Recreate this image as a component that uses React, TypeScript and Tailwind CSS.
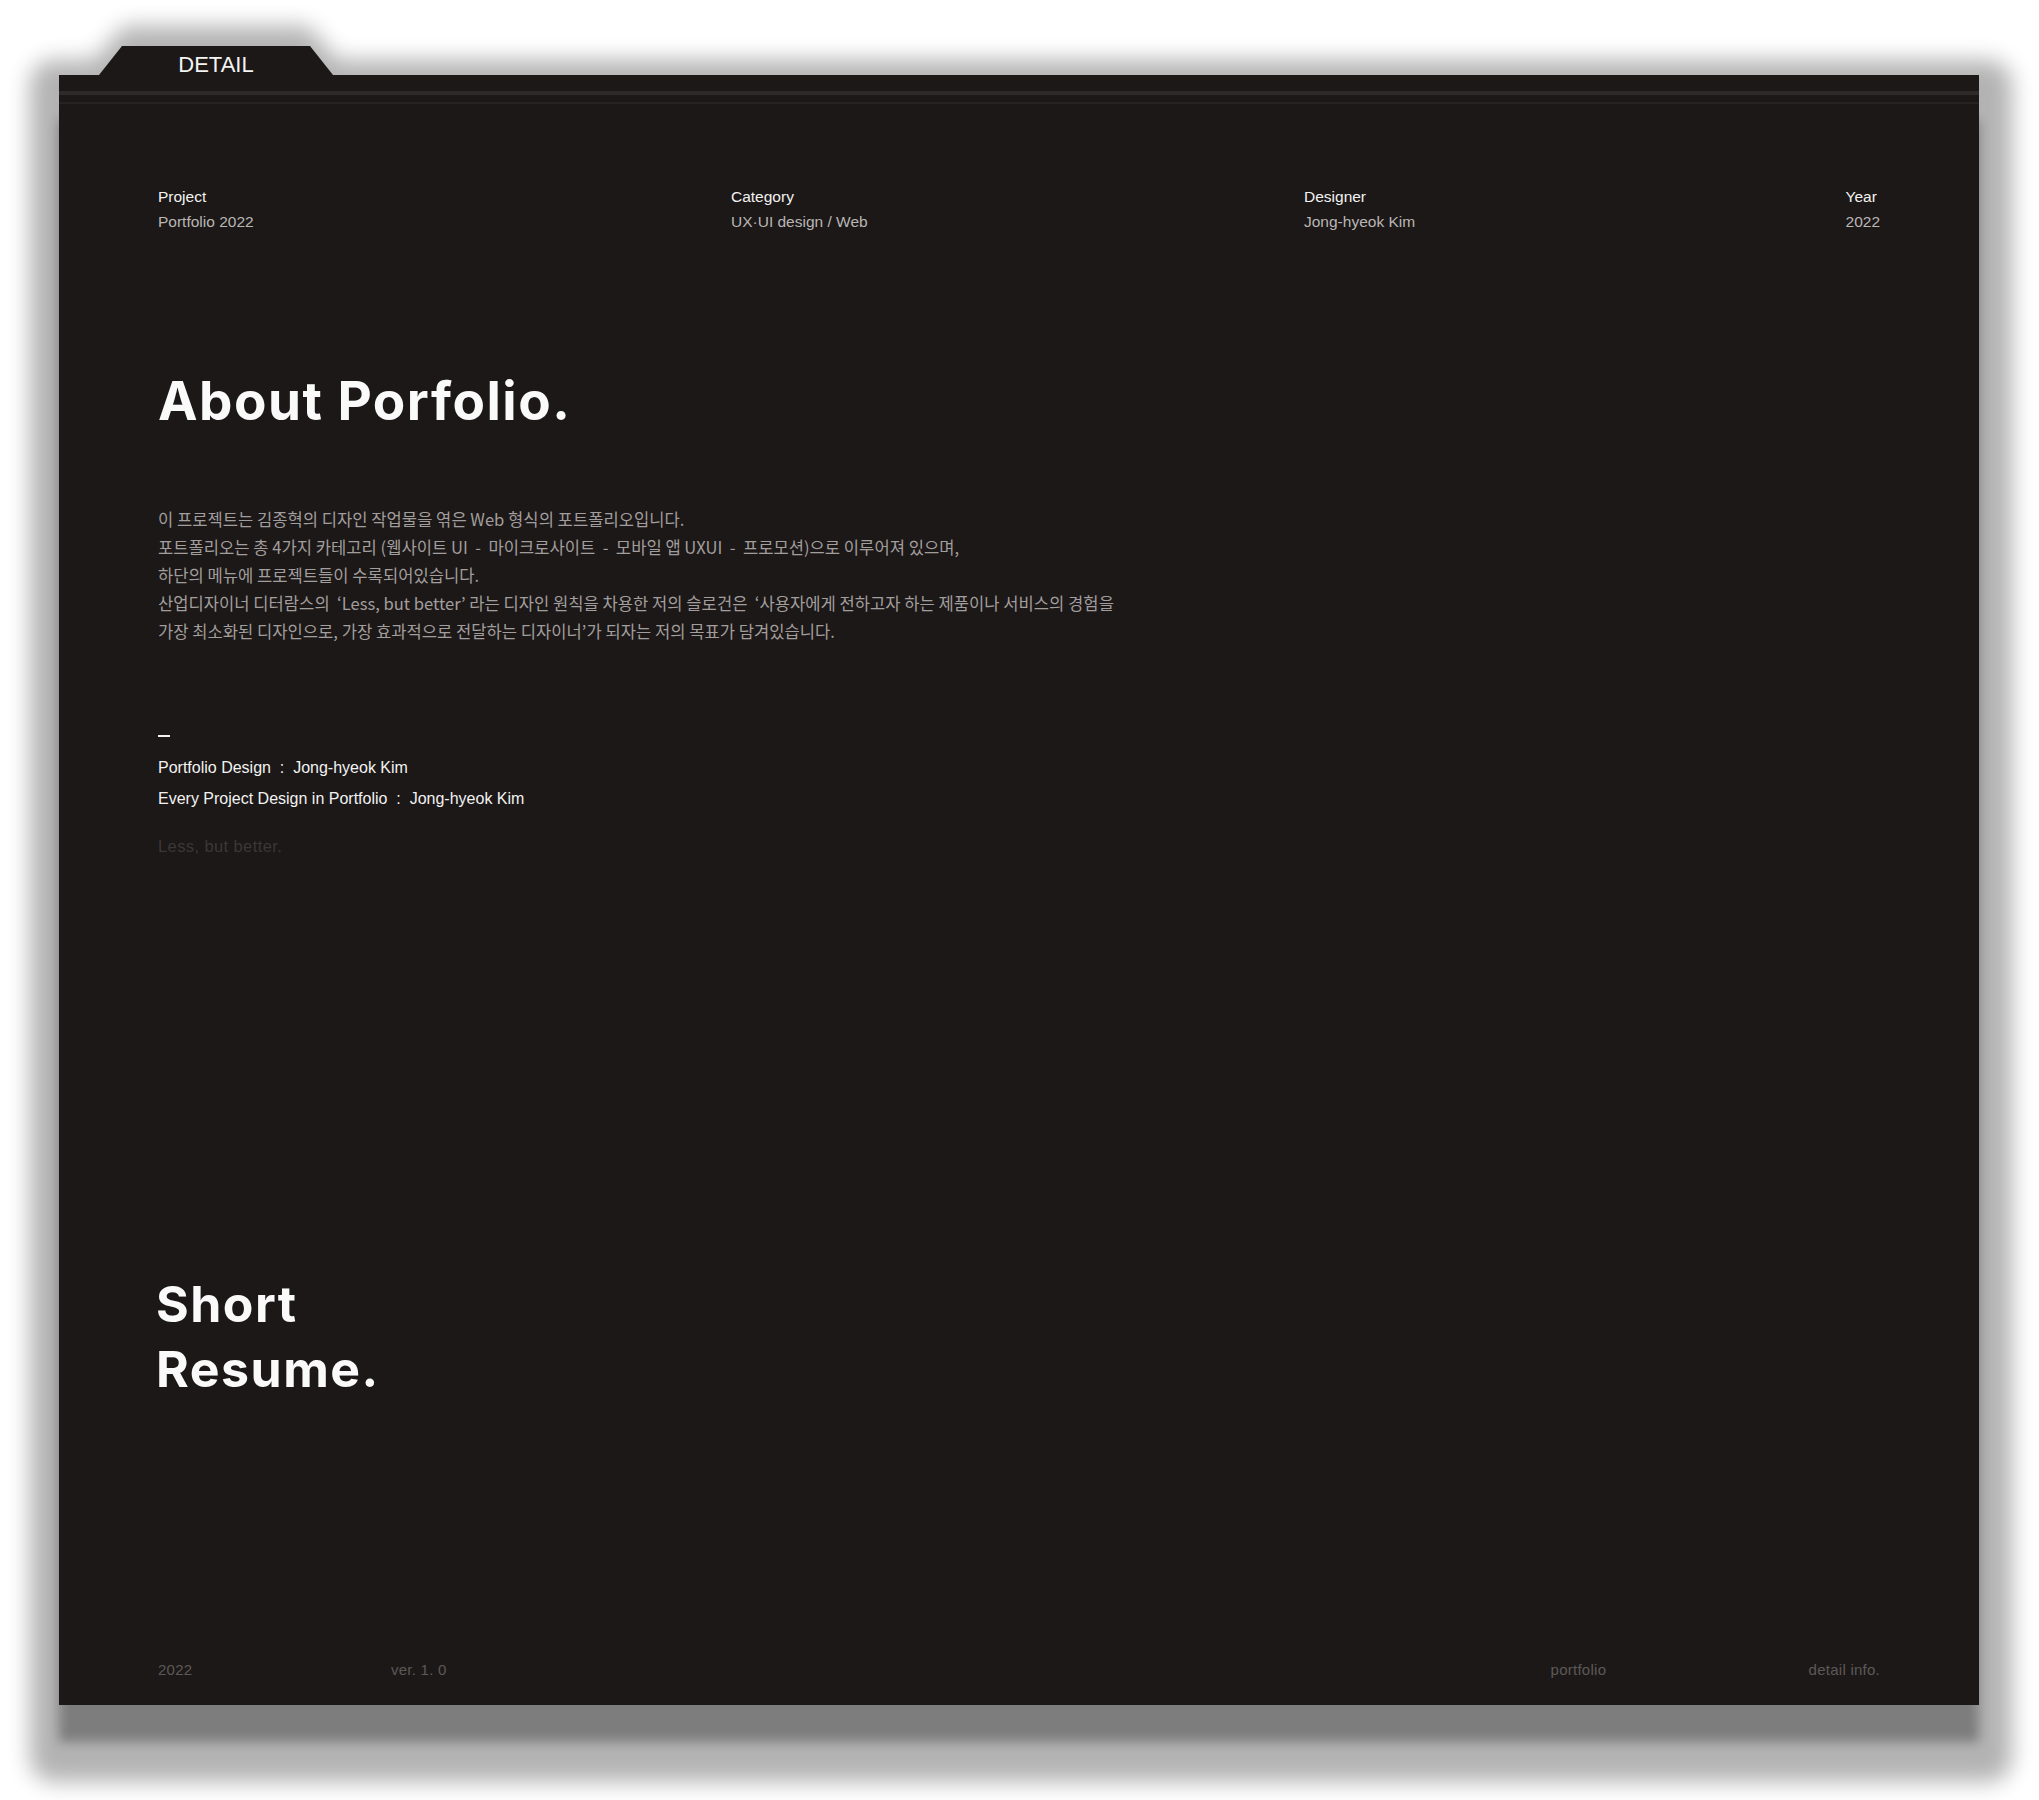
import React from "react";

const sans = { fontFamily: '"Liberation Sans", Arial, sans-serif' };
const head = { fontFamily: 'Inter, "Liberation Sans", sans-serif' };
const kr = { fontFamily: '"Noto Sans CJK KR", "Noto Sans", sans-serif' };

export default function App() {
  return (
    <div className="min-h-[1800px] w-[2039px] overflow-hidden bg-white pl-[59px] pt-[46px]">
      <div className="relative w-[1920px]">
        {/* shadow layers */}
        <div className="pointer-events-none absolute inset-0 opacity-30 blur-[11px]">
          <div className="absolute left-[-29px] right-[-33px] top-[14px] bottom-[-77px] rounded-[24px] bg-black" />
          <div className="absolute left-[4px] top-[-20px] h-[70px] w-[306px] bg-black [clip-path:polygon(20%_0,80%_0,100%_100%,0_100%)]" />
        </div>
        <div className="pointer-events-none absolute inset-0 opacity-30 blur-[6px]">
          <div className="absolute left-0 right-0 top-[74px] bottom-[-37px] bg-black" />
        </div>

        <div className="relative flex flex-col">
          {/* tab */}
          <div className="ml-[40px] flex h-[29px] w-[234px] items-start justify-center bg-[#1c1817] pt-[8px] [clip-path:polygon(23px_0,211px_0,100%_100%,0_100%)]">
            <span style={sans} className="text-[22px] leading-[22px] text-[#f4f4f4]">DETAIL</span>
          </div>

          {/* panel */}
          <div className="flex h-[1630px] flex-col bg-[#1c1817] pt-[16px]">
            <div className="h-[4px] bg-[#2e2a29]" />
            <div className="mt-[7px] h-[2px] bg-[#262221]" />

            <div className="flex flex-1 flex-col px-[99px] pt-[80px]">
              {/* meta */}
              <div style={sans} className="grid grid-cols-[573px_573px_1fr] text-[15.5px] leading-[25px]">
                <div>
                  <div className="text-[#f2f2f2]">Project</div>
                  <div className="text-[#b9b6b5]">Portfolio 2022</div>
                </div>
                <div>
                  <div className="text-[#f2f2f2]">Category</div>
                  <div className="text-[#b9b6b5]">UX·UI design / Web</div>
                </div>
                <div className="flex justify-between">
                  <div>
                    <div className="text-[#f2f2f2]">Designer</div>
                    <div className="text-[#b9b6b5]">Jong-hyeok Kim</div>
                  </div>
                  <div>
                    <div className="text-[#f2f2f2]">Year</div>
                    <div className="text-[#b9b6b5]">2022</div>
                  </div>
                </div>
              </div>

              <h2 style={head} className="mt-[141px] text-[53px] font-bold leading-[53px] tracking-[1.5px] text-[#fafafa]">
                About Porfolio.
              </h2>

              <p style={kr} className="mt-[77px] text-[16.6px] leading-[28px] text-[#a29e9d]">
                이 프로젝트는 김종혁의 디자인 작업물을 엮은 Web 형식의 포트폴리오입니다.
                <br />
                포트폴리오는 총 4가지 카테고리 (웹사이트 UI&nbsp; - &nbsp;마이크로사이트&nbsp; - &nbsp;모바일 앱 UXUI&nbsp; - &nbsp;프로모션)으로 이루어져 있으며,
                <br />
                하단의 메뉴에 프로젝트들이 수록되어있습니다.
                <br />
                산업디자이너 디터람스의 &nbsp;‘Less, but better’ 라는 디자인 원칙을 차용한 저의 슬로건은 &nbsp;‘사용자에게 전하고자 하는 제품이나 서비스의 경험을
                <br />
                가장 최소화된 디자인으로, 가장 효과적으로 전달하는 디자이너’가 되자는 저의 목표가 담겨있습니다.
              </p>

              <div className="mt-[90px] h-[2px] w-[12px] bg-[#f2f2f2]" />

              <div style={sans} className="mt-[15px] text-[16px] leading-[31px] text-[#f2f2f2]">
                <div>Portfolio Design&nbsp; : &nbsp;Jong-hyeok Kim</div>
                <div>Every Project Design in Portfolio&nbsp; : &nbsp;Jong-hyeok Kim</div>
              </div>

              <div style={sans} className="mt-[17px] text-[16.5px] leading-[31px] tracking-[0.4px] text-[#3b3737]">
                Less, but better.
              </div>

              <h2 style={head} className="-ml-[2px] mt-[410px] text-[50px] font-bold leading-[65px] tracking-[1.5px] text-[#fafafa]">
                Short
                <br />
                Resume.
              </h2>

              <div style={sans} className="mt-auto flex justify-between pb-[25px] text-[15px] leading-[20px] tracking-[0.25px] text-[#5c5858]">
                <div className="flex">
                  <span className="w-[233px]">2022</span>
                  <span>ver. 1. 0</span>
                </div>
                <div className="flex">
                  <span className="w-[258px]">portfolio</span>
                  <span>detail info.</span>
                </div>
              </div>
            </div>
          </div>
        </div>
      </div>
    </div>
  );
}
